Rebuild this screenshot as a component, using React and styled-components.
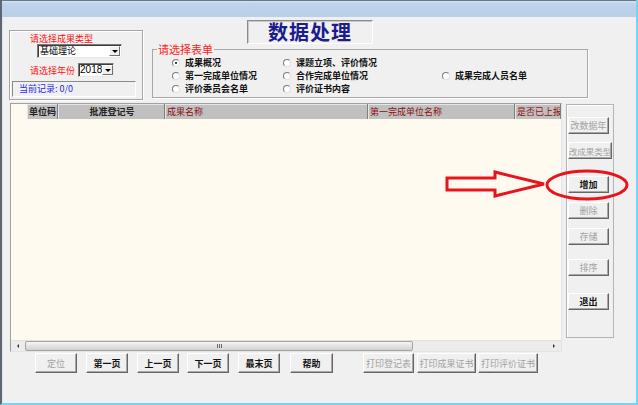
import React from 'react';
import styled, { createGlobalStyle } from 'styled-components';

const FONT = `"Noto Sans CJK SC", "Liberation Sans", sans-serif`;

const Global = createGlobalStyle`
  html, body { margin: 0; padding: 0; background: #f0f0f0; }
  body { font-family: ${FONT}; }
  *, *::before, *::after { box-sizing: border-box; }
`;

const Screen = styled.div`
  position: relative;
  width: 638px;
  height: 405px;
  overflow: hidden;
`;

const Window = styled.div`
  width: 638px;
  height: 405px;
  display: flex;
  flex-direction: column;
  border-left: 2px solid #5f6670;
  border-right: 2px solid #74d4f6;
  border-bottom: 2px solid #74d4f6;
  background: #f0f0f0;
`;

const TitleBar = styled.div`
  flex: none;
  height: 17px;
  border-top: 1px solid #6b7783;
  background: linear-gradient(#d3e2f2 0, #bcd3ea 3px, #b9d0e9 100%);
`;

const Client = styled.div`
  flex: 1;
  display: flex;
  flex-direction: column;
  background: #f0f0f0;
  box-shadow: inset 1px 0 0 #d9e5f1;
`;

const TopRow = styled.div`
  display: flex;
  align-items: flex-start;
  padding-left: 7px;
  height: 83px;
`;

const TypeGroup = styled.div`
  flex: none;
  margin-top: 13px;
  width: 134px;
  height: 70px;
  border: 1px solid #a6a6a6;
  box-shadow: inset 1px 1px 0 #fff, 1px 1px 0 #fff;
  display: flex;
  flex-direction: column;
`;

const RedLabel = styled.div`
  margin-left: ${p => p.$ml || 0}px;
  margin-top: ${p => p.$mt || 0}px;
  font-size: 9px;
  line-height: 11px;
  color: #ff1010;
  white-space: nowrap;
`;

const Combo = styled.div`
  flex: none;
  display: flex;
  width: ${p => p.$w}px;
  height: 14px;
  margin-left: ${p => p.$ml || 0}px;
  background: #fff;
  border: 1px solid;
  border-color: #7a7a7a #e8e8e8 #e8e8e8 #7a7a7a;
  box-shadow: inset 1px 1px 0 #3c3c3c;
`;

const ComboText = styled.div`
  flex: 1;
  padding-left: ${p => p.$pl || 2}px;
  line-height: 12px;
  color: #000;
  font-family: ${p => (p.$num ? `"Liberation Sans", sans-serif` : FONT)};
  font-size: ${p => (p.$num ? 10 : 9)}px;
`;

const DropBtn = styled.div`
  flex: none;
  width: 11px;
  margin: 1px 1px 1px 0;
  background: #f0f0f0;
  border: 1px solid;
  border-color: #fff #707070 #707070 #fff;
  display: flex;
  align-items: center;
  justify-content: center;
`;

const Tri = styled.div`
  width: 0;
  height: 0;
  border-left: 3px solid transparent;
  border-right: 3px solid transparent;
  border-top: 3px solid #000;
`;

const YearRow = styled.div`
  display: flex;
  align-items: center;
  margin-top: 5px;
  height: 14px;
`;

const StatusBox = styled.div`
  margin: 4px 0 0 2px;
  width: 124px;
  height: 16px;
  border: 1px solid;
  border-color: #8a8a8a #fff #fff #8a8a8a;
  padding-left: 6px;
  font-size: 9px;
  line-height: 13px;
  color: #2a2ae8;
`;

const RightCol = styled.div`
  flex: none;
  margin-left: 9px;
  width: 436px;
  display: flex;
  flex-direction: column;
`;

const TitleBox = styled.div`
  margin: 3px 0 0 95px;
  width: 126px;
  height: 24px;
  border: 1px solid;
  border-color: #8a8a8a #fff #fff #8a8a8a;
  box-shadow: inset 1px 1px 0 #c8c8c8;
  text-align: center;
  font-size: 20px;
  line-height: 21px;
  font-weight: 700;
  letter-spacing: 1px;
  color: #1c1c8e;
`;

const FormGroup = styled.fieldset`
  margin: 0;
  padding: 0;
  min-width: 0;
  width: 436px;
  height: 54px;
  border: 1px solid #a8a8a8;
  box-shadow: 1px 1px 0 #fff;
`;

const Legend = styled.legend`
  margin-left: 4px;
  padding: 0 1px;
  font-size: 11px;
  line-height: 11px;
  height: 11px;
  color: #ff1a1a;
`;

const RadioGrid = styled.div`
  margin: 1px 0 0 19px;
  display: grid;
  grid-template-columns: 111px 159px auto;
  grid-auto-rows: 13px;
`;

const RadioItem = styled.div`
  display: flex;
  align-items: center;
  gap: 5px;
  font-size: 9px;
  line-height: 11px;
  font-weight: 700;
  color: #111;
  white-space: nowrap;
`;

const RadioDot = styled.span`
  flex: none;
  width: 8px;
  height: 8px;
  border-radius: 50%;
  border: 1px solid;
  border-color: #7c7c7c #e0e0e0 #e0e0e0 #7c7c7c;
  background: #fff;
  display: flex;
  align-items: center;
  justify-content: center;
  &::after {
    content: '';
    width: 2px;
    height: 2px;
    border-radius: 50%;
    background: ${p => (p.$on ? '#111' : 'transparent')};
  }
`;

const MainRow = styled.div`
  display: flex;
  align-items: flex-start;
  margin-top: 3px;
  padding-left: 8px;
`;

const DataGrid = styled.div`
  flex: none;
  width: 552px;
  height: 249px;
  display: flex;
  flex-direction: column;
  border: 1px solid;
  border-color: #a0a0a0 #e4e4e4 #e4e4e4 #a0a0a0;
  background: #fffaf0;
`;

const HeaderRow = styled.div`
  flex: none;
  display: flex;
  height: 15px;
  padding-left: 16px;
`;

const HeaderCell = styled.div`
  flex: none;
  width: ${p => p.$w}px;
  background: #c0c0c0;
  border-right: 1px solid #7e7e7e;
  box-shadow: inset 1px 1px 0 #e6e6e6;
  padding-left: 2px;
  font-size: 9px;
  line-height: 15px;
  font-weight: ${p => (p.$dark ? 700 : 400)};
  color: ${p => p.$color || '#8e1010'};
  text-align: ${p => p.$align || 'left'};
  white-space: nowrap;
  overflow: hidden;
`;

const GridBody = styled.div`
  flex: 1;
`;

const HScroll = styled.div`
  flex: none;
  height: 11px;
  display: flex;
  align-items: stretch;
  background: #ececec;
  border-top: 1px solid #e0e0e0;
`;

const ArrowCell = styled.div`
  flex: none;
  width: 14px;
  display: flex;
  align-items: center;
  justify-content: center;
  margin-left: ${p => (p.$end ? 'auto' : '0')};
  &::after {
    content: '';
    width: 0;
    height: 0;
    border-top: 2px solid transparent;
    border-bottom: 2px solid transparent;
    ${p => (p.$end ? 'border-left: 2px solid #333;' : 'border-right: 2px solid #333;')}
  }
`;

const Thumb = styled.div`
  flex: none;
  width: 388px;
  border: 1px solid #a4a4a4;
  border-radius: 2px;
  background: linear-gradient(#f6f6f6, #e2e2e2 55%, #d2d2d2);
  display: flex;
  align-items: center;
  justify-content: center;
  gap: 1px;
`;

const Grip = styled.span`
  width: 1px;
  height: 4px;
  background: #6a6a6a;
`;

const SidePanel = styled.div`
  flex: none;
  margin: 1px 0 0 4px;
  width: 48px;
  height: 234px;
  border: 1px solid #b4b4b4;
  box-shadow: inset 1px 1px 0 #fff;
  display: flex;
  flex-direction: column;
  align-items: flex-start;
  padding-left: 1px;
`;

const Btn = styled.button`
  flex: none;
  width: ${p => p.$w}px;
  height: ${p => p.$h}px;
  margin-left: ${p => p.$ml || 0}px;
  margin-top: ${p => p.$mt || 0}px;
  padding: 0;
  background: #f0f0f0;
  border: 1px solid;
  border-color: #fff #666 #666 #fff;
  box-shadow: inset -1px -1px 0 #a8a8a8;
  font-family: ${FONT};
  font-size: ${p => p.$fs || 9}px;
  font-weight: ${p => (p.disabled ? 400 : 700)};
  color: ${p => (p.disabled ? '#a2a2a2' : '#141414')};
  white-space: nowrap;
  overflow: hidden;
  display: flex;
  align-items: center;
  justify-content: center;
  cursor: default;
`;

const BottomRow = styled.div`
  display: flex;
  align-items: flex-start;
  margin-top: 1px;
  padding-left: 33px;
`;

const Annotation = styled.svg`
  position: absolute;
  top: 0;
  left: 0;
  pointer-events: none;
`;

const radios = [
  ['成果概况', true], ['课题立项、评价情况'], [null],
  ['第一完成单位情况'], ['合作完成单位情况'], ['成果完成人员名单'],
  ['评价委员会名单'], ['评价证书内容'], [null],
];

const sideButtons = [
  { t: '改数据年', mt: 12, w: 41, off: true },
  { t: '改成果类型', mt: 8, w: 44, off: true, fs: 8.5 },
  { t: '增加', mt: 17, w: 41 },
  { t: '删除', mt: 9, w: 41, off: true },
  { t: '存储', mt: 9, w: 41, off: true },
  { t: '排序', mt: 14, w: 41, off: true },
  { t: '退出', mt: 17, w: 41 },
];

const bottomButtons = [
  { t: '定位', ml: 0, w: 42, off: true },
  { t: '第一页', ml: 9, w: 42 },
  { t: '上一页', ml: 9, w: 42 },
  { t: '下一页', ml: 8, w: 42 },
  { t: '最末页', ml: 9, w: 42 },
  { t: '帮助', ml: 10, w: 43 },
  { t: '打印登记表', ml: 30, w: 51, off: true },
  { t: '打印成果证书', ml: 3, w: 59, off: true },
  { t: '打印评价证书', ml: 2, w: 60, off: true },
];

export default function App() {
  return (
    <>
      <Global />
      <Screen>
        <Window>
          <TitleBar />
          <Client>
            <TopRow>
              <TypeGroup>
                <RedLabel $ml={20} $mt={2}>请选择成果类型</RedLabel>
                <Combo $w={85} $ml={27}>
                  <ComboText>基础理论</ComboText>
                  <DropBtn><Tri /></DropBtn>
                </Combo>
                <YearRow>
                  <RedLabel $ml={20}>请选择年份</RedLabel>
                  <Combo $w={36} $ml={3}>
                    <ComboText $num $pl={1}>2018</ComboText>
                    <DropBtn><Tri /></DropBtn>
                  </Combo>
                </YearRow>
                <StatusBox>当前记录: 0/0</StatusBox>
              </TypeGroup>
              <RightCol>
                <TitleBox>数据处理</TitleBox>
                <FormGroup>
                  <Legend>请选择表单</Legend>
                  <RadioGrid>
                    {radios.map(([label, on], i) =>
                      label ? (
                        <RadioItem key={i}>
                          <RadioDot $on={on} />
                          {label}
                        </RadioItem>
                      ) : (
                        <span key={i} />
                      )
                    )}
                  </RadioGrid>
                </FormGroup>
              </RightCol>
            </TopRow>
            <MainRow>
              <DataGrid>
                <HeaderRow>
                  <HeaderCell $w={31} $color="#222" $dark>单位码</HeaderCell>
                  <HeaderCell $w={107} $color="#222" $align="center" $dark>批准登记号</HeaderCell>
                  <HeaderCell $w={203}>成果名称</HeaderCell>
                  <HeaderCell $w={147}>第一完成单位名称</HeaderCell>
                  <HeaderCell $w={46}>是否已上报</HeaderCell>
                </HeaderRow>
                <GridBody />
                <HScroll>
                  <ArrowCell />
                  <Thumb>
                    <Grip /><Grip /><Grip />
                  </Thumb>
                  <ArrowCell $end />
                </HScroll>
              </DataGrid>
              <SidePanel>
                {sideButtons.map(b => (
                  <Btn key={b.t} $w={b.w} $h={17} $mt={b.mt} $fs={b.fs} disabled={!!b.off}>
                    {b.t}
                  </Btn>
                ))}
              </SidePanel>
            </MainRow>
            <BottomRow>
              {bottomButtons.map(b => (
                <Btn key={b.t} $w={b.w} $h={20} $ml={b.ml} disabled={!!b.off}>
                  {b.t}
                </Btn>
              ))}
            </BottomRow>
          </Client>
        </Window>
        <Annotation width="638" height="405" viewBox="0 0 638 405">
          <polygon
            points="447,178 495,178 495,172 544,184 495,196 495,190 447,190"
            fill="none"
            stroke="#e8141c"
            strokeWidth="3"
            strokeLinejoin="miter"
          />
          <ellipse cx="587" cy="185" rx="40" ry="14" fill="none" stroke="#e8141c" strokeWidth="3" />
        </Annotation>
      </Screen>
    </>
  );
}
